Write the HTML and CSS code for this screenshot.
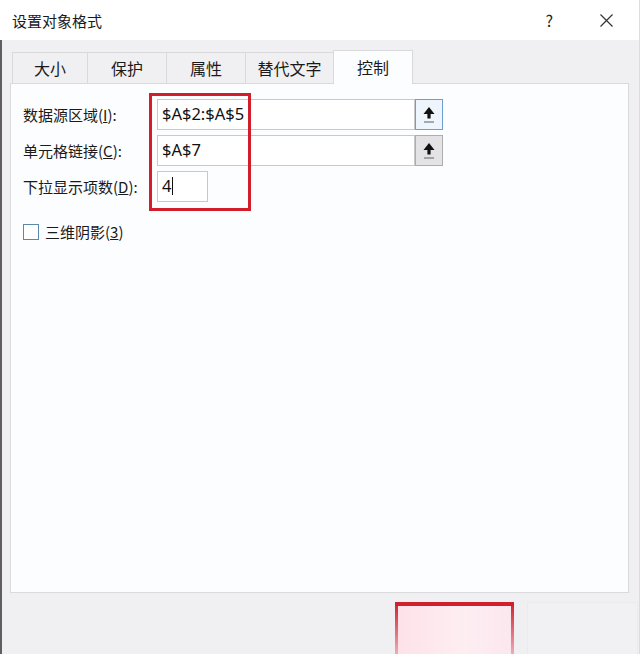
FILE: index.html
```html
<!DOCTYPE html>
<html lang="zh-CN">
<head>
  <meta charset="UTF-8">
  <meta name="viewport" content="width=device-width, initial-scale=1.0">
  <title>设置对象格式</title>
  <link rel="stylesheet" href="styles.css">
</head>
<body>
  <div class="dialog">
    <!-- 标题栏 -->
    <div class="titlebar">
      <span class="title">设置对象格式</span>
      <span class="help">?</span>
      <span class="close">
        <svg width="13" height="13" viewBox="0 0 13 13">
          <path d="M0.5 0.5 L12.5 12.5 M12.5 0.5 L0.5 12.5" stroke="#333" stroke-width="1.2" fill="none"/>
        </svg>
      </span>
    </div>

    <div class="content">
      <!-- 选项卡 -->
      <div class="tabs">
        <div class="tab tab-size">大小</div>
        <div class="tab tab-protect">保护</div>
        <div class="tab tab-props">属性</div>
        <div class="tab tab-alt">替代文字</div>
        <div class="tab tab-control active">控制</div>
      </div>

      <div class="panel">
        <div class="form">
          <div class="row">
            <label class="label">数据源区域(<u>I</u>):</label>
            <div class="field wide">$A$2:$A$5</div>
            <button class="pick focused">
              <svg width="16" height="18" viewBox="0 0 16 18">
                <path d="M8 1 L13.5 8 L9.6 8 L9.6 12.5 L6.4 12.5 L6.4 8 L2.5 8 Z" fill="#111"/>
                <path d="M3 16 L13 16" stroke="#777" stroke-width="1.2"/>
              </svg>
            </button>
          </div>
          <div class="row">
            <label class="label">单元格链接(<u>C</u>):</label>
            <div class="field wide">$A$7</div>
            <button class="pick">
              <svg width="16" height="18" viewBox="0 0 16 18">
                <path d="M8 1 L13.5 8 L9.6 8 L9.6 12.5 L6.4 12.5 L6.4 8 L2.5 8 Z" fill="#111"/>
                <path d="M3 16 L13 16" stroke="#777" stroke-width="1.2"/>
              </svg>
            </button>
          </div>
          <div class="row">
            <label class="label">下拉显示项数(<u>D</u>):</label>
            <div class="field short">4<span class="caret"></span></div>
          </div>
        </div>

        <!-- 红色标注框 -->
        <div class="highlight"></div>

        <div class="check">
          <span class="box"></span>
          <span>三维阴影(<u>3</u>)</span>
        </div>
      </div>
    </div>

    <div class="footer">
      <div class="ok-mark"></div>
      <div class="cancel"></div>
    </div>
  </div>
</body>
</html>
```

FILE: styles.css
```css
body {
  margin: 0;
  padding: 0;
  width: 640px;
  height: 654px;
  overflow: hidden;
  font-family: "Noto Sans CJK SC", "Noto Sans", sans-serif;
  color: #1a1a1a;
  background: #f0f0f2;
}

.dialog {
  width: 640px;
  height: 654px;
  display: flex;
  flex-direction: column;
  box-sizing: border-box;
  border-right: 1px solid #dcdcdc;
}

/* 标题栏 */
.titlebar {
  flex-shrink: 0;
  height: 40px;
  background: #fff;
  display: flex;
  align-items: center;
  padding-left: 12px;
  font-size: 15px;
}

.title {
  flex: 1;
}

.help {
  font-size: 16px;
  margin-right: 47px;
  color: #222;
}

.close {
  display: flex;
  margin-right: 26px;
}

.content {
  flex-shrink: 0;
  background: #f0f0f2;
  border-left: 2px solid #5f5f62;
  padding: 10px 10px 0 8px;
}

/* 选项卡 */
.tabs {
  display: flex;
  align-items: flex-end;
  padding-left: 2px;
  height: 33px;
}

.tab {
  height: 31px;
  box-sizing: border-box;
  border: 1px solid #d9d9db;
  border-bottom: none;
  margin-right: -1px;
  display: flex;
  align-items: center;
  justify-content: center;
  font-size: 16px;
  background: #f0f0f2;
}

.tab-size { width: 76px; }
.tab-protect { width: 80px; }
.tab-props { width: 80px; }
.tab-alt { width: 89px; }

.tab-control {
  width: 80px;
  height: 34px;
  background: #fcfdff;
  position: relative;
  z-index: 2;
  margin-bottom: -1px;
  padding-bottom: 2px;
}

.panel {
  position: relative;
  height: 510px;
  box-sizing: border-box;
  background: #fcfdff;
  border: 1px solid #dadadc;
  padding: 15px 12px 0 12px;
}

.form {
  display: flex;
  flex-direction: column;
  gap: 5px;
}

.row {
  display: flex;
  align-items: center;
  height: 31px;
}

.label {
  width: 134px;
  font-size: 15px;
}

.field {
  height: 31px;
  box-sizing: border-box;
  border: 1px solid #c9c9cb;
  background: #fff;
  font-family: "Noto Sans", sans-serif;
  font-size: 16.5px;
  line-height: 28px;
  padding-left: 4px;
  color: #111;
}

.wide {
  width: 258px;
}

.short {
  width: 51px;
}

.caret {
  display: inline-block;
  width: 1px;
  height: 18px;
  background: #111;
  vertical-align: -3px;
  margin-left: 1px;
}

.pick {
  width: 28px;
  height: 31px;
  margin: 0;
  padding: 0;
  box-sizing: border-box;
  border: 1px solid #adadad;
  background: #e3e3e5;
  display: flex;
  align-items: center;
  justify-content: center;
}

.pick.focused {
  border: 1px solid #6aa0d4;
  background: #eef5fc;
}

.highlight {
  position: absolute;
  left: 138px;
  top: 9px;
  width: 102px;
  height: 118px;
  box-sizing: border-box;
  border: 3px solid #d21d2b;
}

.check {
  display: flex;
  align-items: center;
  gap: 6px;
  margin-top: 19px;
  font-size: 15px;
}

.box {
  width: 16px;
  height: 16px;
  box-sizing: border-box;
  border: 1px solid #5b88ad;
  background: #fff;
}

/* 底部按钮区 */
.footer {
  flex: 1;
  min-height: 0;
  overflow: hidden;
  display: flex;
  justify-content: flex-end;
  align-items: flex-start;
  border-left: 2px solid #5f5f62;
  padding-top: 9px;
  padding-right: 1px;
  gap: 13px;
}

.ok-mark {
  flex-shrink: 0;
  width: 119px;
  height: 60px;
  background:
    linear-gradient(#d01f2d, #d01f2d) top / 100% 4px no-repeat,
    linear-gradient(#d01f2d, #f4c1cc) left / 3px 100% no-repeat,
    linear-gradient(#d01f2d, #f4c1cc) right / 3px 100% no-repeat,
    linear-gradient(to right, #fde2e8, #fdeef2 60%, #fbe6ee);
}

.cancel {
  flex-shrink: 0;
  width: 111px;
  height: 60px;
  box-sizing: border-box;
  border: 1px solid #ebebed;
  border-bottom: none;
  background: #f1f1f3;
}
```
